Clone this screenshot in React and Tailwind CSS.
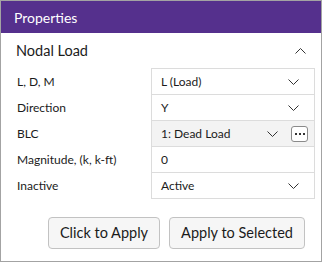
import React from 'react';

const Chevron = ({ up = false, className = '' }) => (
  <svg width="11" height="6" viewBox="0 0 11 6" className={className}>
    <polyline
      points={up ? '0.5,5.5 5.5,0.5 10.5,5.5' : '0.5,0.5 5.5,5.5 10.5,0.5'}
      fill="none"
      stroke="#333"
      strokeWidth="1"
    />
  </svg>
);

const rows = [
  { label: 'L, D, M', value: 'L (Load)', type: 'select' },
  { label: 'Direction', value: 'Y', type: 'select' },
  { label: 'BLC', value: '1: Dead Load', type: 'blc' },
  { label: 'Magnitude, (k, k-ft)', value: '0', type: 'input' },
  { label: 'Inactive', value: 'Active', type: 'select' },
];

export default function App() {
  return (
    <div
      className="w-[322px] h-[262px] border border-[#a3a3a3] bg-white flex flex-col text-[#1b1b1b]"
      style={{ fontFamily: 'Lato, "Noto Sans", sans-serif' }}
    >
      {/* Header */}
      <div className="h-[32px] bg-[#55308d] flex items-center px-[13px] text-white text-[14px]">
        Properties
      </div>

      {/* Section title */}
      <div className="h-[36px] flex items-center justify-between pl-[15px] pr-[15px]">
        <span className="text-[14.5px]">Nodal Load</span>
        <Chevron up />
      </div>

      {/* Fields */}
      <div className="flex flex-col">
        {rows.map((row, i) => (
          <div key={row.label} className="flex h-[26px]">
            <div className="w-[150px] pl-[16px] flex items-center text-[12px]">{row.label}</div>
            <div
              className={`w-[164px] border-x border-b border-[#dcdcdc] flex items-center pl-[9px] text-[12px] ${
                i === 0 ? 'border-t h-[27px] -mt-px' : ''
              } ${row.type === 'blc' ? 'bg-[#f3f3f3]' : 'bg-white'}`}
            >
              <span className="flex-1">{row.value}</span>
              {row.type === 'select' && <Chevron className="mr-[15px]" />}
              {row.type === 'blc' && (
                <>
                  <Chevron className="mr-[13px]" />
                  <div className="w-[17px] h-[16px] mr-[6px] border border-[#8a8a8a] rounded-[3px] bg-white flex items-center justify-center gap-[2px]">
                    <span className="w-[2px] h-[2px] bg-[#333]" />
                    <span className="w-[2px] h-[2px] bg-[#333]" />
                    <span className="w-[2px] h-[2px] bg-[#333]" />
                  </div>
                </>
              )}
            </div>
          </div>
        ))}
      </div>

      {/* Buttons */}
      <div className="flex justify-end gap-[9px] pr-[16px] mt-[18px]">
        <button className="w-[112px] h-[32px] border border-[#c2c2c2] rounded-[4px] bg-[#f6f6f6] text-[14.5px]">
          Click to Apply
        </button>
        <button className="w-[136px] h-[32px] border border-[#c2c2c2] rounded-[4px] bg-[#f6f6f6] text-[14.5px]">
          Apply to Selected
        </button>
      </div>
    </div>
  );
}
